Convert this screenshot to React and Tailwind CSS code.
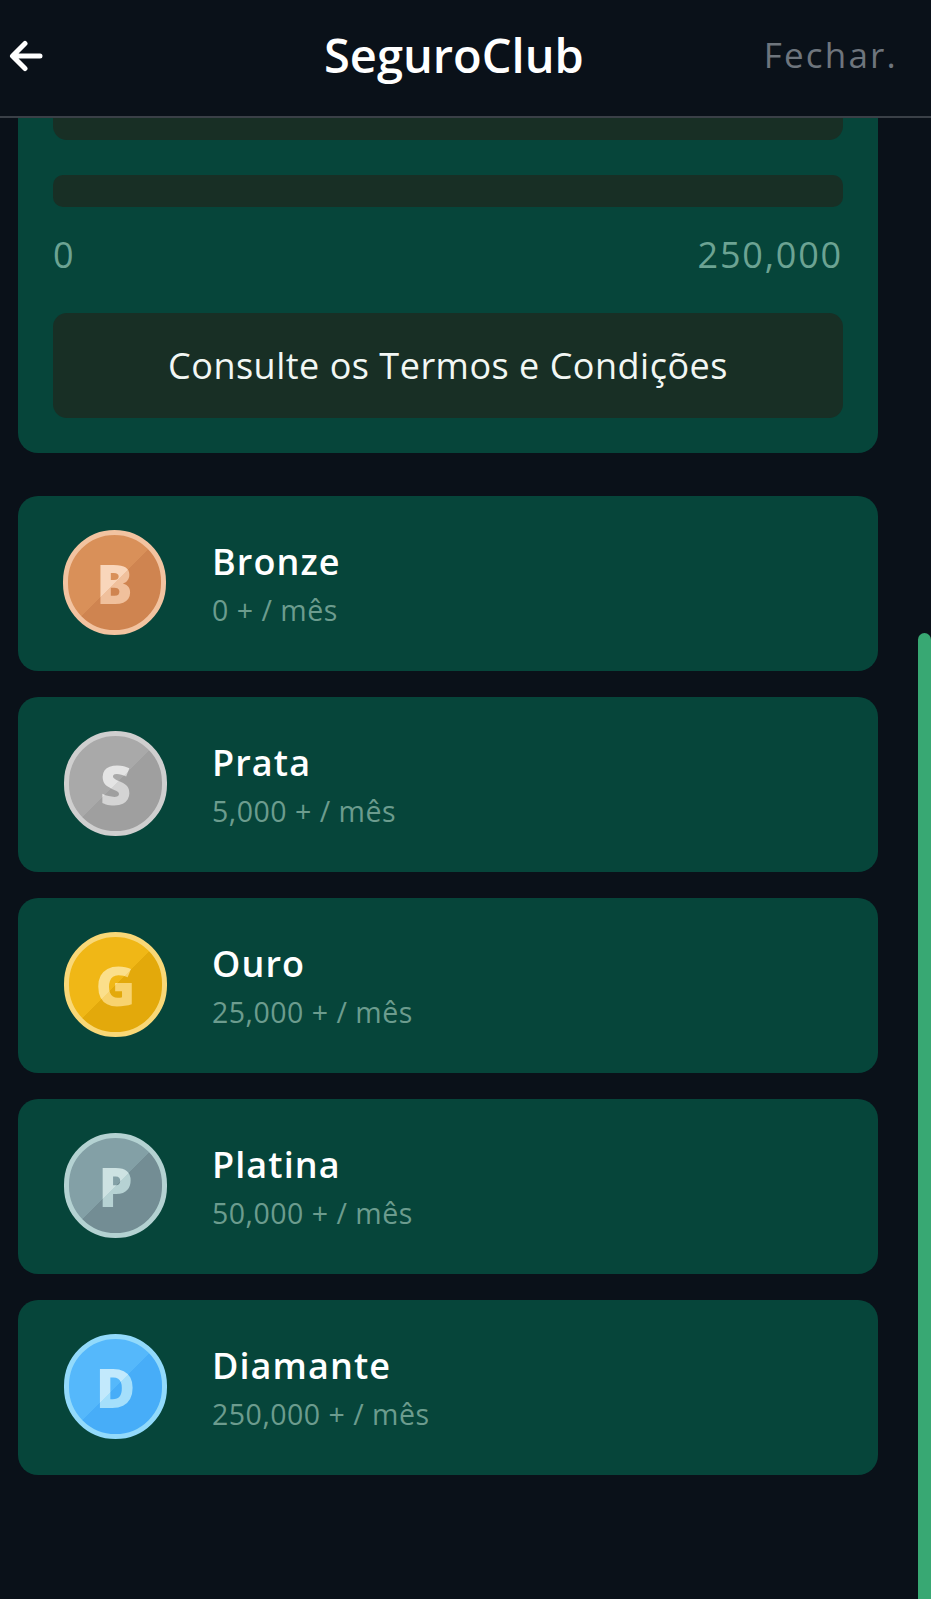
const tiers = [
  { name: "Bronze", sub: "0 + / mês", letter: "B", coin: "border-[#f2c3a0] bg-[linear-gradient(135deg,#d99059_50%,#cf8450_50%)]", mark: "bg-[linear-gradient(135deg,#f9d6bb_50%,#f0c09c_50%)]", ml: "ml-[45px]", tl: "ml-[46px]" },
  { name: "Prata", sub: "5,000 + / mês", letter: "S", coin: "border-[#cfcfcf] bg-[linear-gradient(135deg,#a9a9a9_50%,#9f9f9f_50%)]", mark: "bg-[linear-gradient(135deg,#e4e4e4_50%,#d4d4d4_50%)]", ml: "ml-[46px]", tl: "ml-[45px]" },
  { name: "Ouro", sub: "25,000 + / mês", letter: "G", coin: "border-[#f9d877] bg-[linear-gradient(135deg,#f0b716_50%,#e3a90b_50%)]", mark: "bg-[linear-gradient(135deg,#fbdf8b_50%,#f8d36f_50%)]", ml: "ml-[46px]", tl: "ml-[45px]" },
  { name: "Platina", sub: "50,000 + / mês", letter: "P", coin: "border-[#b4d2d2] bg-[linear-gradient(135deg,#83a0a6_50%,#738d94_50%)]", mark: "bg-[linear-gradient(135deg,#cde2e2_50%,#b6d2d3_50%)]", ml: "ml-[46px]", tl: "ml-[45px]" },
  { name: "Diamante", sub: "250,000 + / mês", letter: "D", coin: "border-[#92dafb] bg-[linear-gradient(135deg,#55b8fb_50%,#47adf8_50%)]", mark: "bg-[linear-gradient(135deg,#c2e9fc_50%,#a5dffb_50%)]", ml: "ml-[46px]", tl: "ml-[45px]" },
];

function Coin({ t }) {
  return (
    <div className={`-mt-[2px] flex h-[105px] w-[103px] shrink-0 items-center justify-center rounded-full border-[5px] blur-[0.6px] ${t.coin} ${t.ml}`}>
      <span className={`bg-clip-text text-[54px] leading-none font-extrabold text-transparent ${t.mark}`}>{t.letter}</span>
    </div>
  );
}

export default function App() {
  return (
    <div className="relative flex h-[1599px] w-[931px] flex-col overflow-hidden bg-[#0a1119] font-['Open_Sans',sans-serif] text-white">
      <header className="relative z-10 flex h-[118px] shrink-0 items-center border-b-2 border-[#3a4047] bg-[#0a1119] pr-[33px] pl-[9px]">
        <svg width="35" height="36" viewBox="0 0 35 36" fill="none" stroke="white" strokeWidth="5" strokeLinecap="round" strokeLinejoin="round" className="-mt-[4px]">
          <path d="M31 18H4M16 5.5 3.5 18 16 30.5" />
        </svg>
        <h1 className="-mt-[6px] ml-[280px] text-[47px] leading-none font-semibold">SeguroClub</h1>
        <span className="-mt-[8px] ml-auto text-[35px] leading-none tracking-[2.2px] text-[#6e757d]">Fechar.</span>
      </header>

      <main className="flex flex-1 flex-col overflow-hidden pl-[18px]">
        <section className="flex h-[335px] w-[860px] shrink-0 flex-col rounded-b-[20px] bg-[#06453a] px-[35px]">
          <div className="h-[22px] rounded-b-[14px] bg-[#182f25]" />
          <div className="mt-[35px] h-[32px] rounded-[10px] bg-[#182f25]" />
          <div className="mt-[28px] flex items-center justify-between text-[36px] leading-[40px] tracking-[1.8px] text-[#6ca393]">
            <span>0</span>
            <span>250,000</span>
          </div>
          <button className="mt-[38px] flex h-[105px] items-center justify-center rounded-[14px] bg-[#182f25] text-[36px] tracking-[0.5px] text-[#f2f7f4]">
            Consulte os Termos e Condições
          </button>
        </section>

        <div className="mt-[43px] flex flex-col gap-[26px]">
          {tiers.map((t) => (
            <div key={t.name} className="flex h-[175px] w-[860px] items-center rounded-[20px] bg-[#06453a]">
              <Coin t={t} />
              <div className={`flex flex-col pt-[3px] ${t.tl}`}>
                <span className="text-[36px] leading-[46px] font-semibold tracking-[1.1px]">{t.name}</span>
                <span className="mt-[3px] text-[28.5px] leading-[44px] tracking-[0.5px] text-[#6c9c8e]">{t.sub}</span>
              </div>
            </div>
          ))}
        </div>
      </main>

      <div className="absolute top-[633px] right-0 bottom-0 w-[13px] rounded-t-full bg-[#38a873]" />
    </div>
  );
}
